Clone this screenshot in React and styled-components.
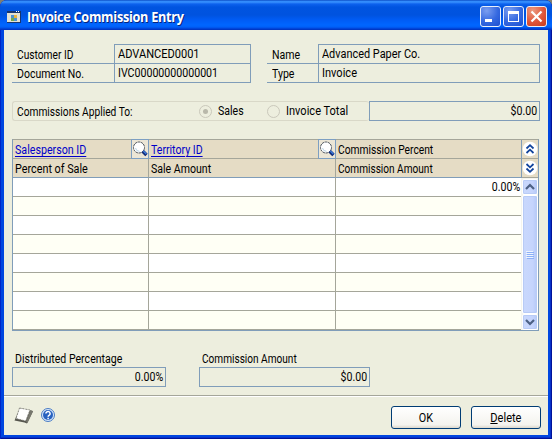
import React from 'react';
import styled, { createGlobalStyle, css } from 'styled-components';

const line = '#809db9';
const grid = '#a5a69a';

const Global = createGlobalStyle`
  * { box-sizing: border-box; }
  html, body { margin: 0; padding: 0; background: #7f7e72; overflow: hidden; }
`;

const Window = styled.div`
  width: 552px;
  height: 439px;
  display: flex;
  flex-direction: column;
  padding: 0 4px 4px;
  border-radius: 7px 7px 0 0;
  background: #0046e0;
  box-shadow: inset 1px 0 #0025c8, inset -1px 0 #00129a, inset 0 -1px #00129a, inset -2px -2px #0831c8;
  font-family: Roboto, "Liberation Sans", sans-serif;
  font-size: 12px;
  line-height: 18px;
  color: #000;
  overflow: hidden;
`;

const TitleBar = styled.header`
  height: 30px;
  flex: none;
  margin: 0 -4px;
  padding: 3px 5px 0 7px;
  display: flex;
  align-items: center;
  background: linear-gradient(#0840b8 0, #2b86f8 1px, #3a92ff 2px, #0d62ee 4px, #0054e0 7px, #0053df 15px, #005cf5 20px, #0066ff 25px, #0060f8 27px, #003dd0 29px, #0030b8 30px);
`;

const Title = styled.h1`
  flex: 1;
  margin: 0 0 0 6px;
  font: 700 13.5px/24px "Open Sans", sans-serif;
  letter-spacing: -0.3px;
  transform: scaleX(0.94);
  transform-origin: left;
  color: #fff;
  text-shadow: 1px 1px #06257d;
  white-space: nowrap;
`;

const Controls = styled.div`
  display: flex;
  gap: 2px;
`;

const Control = styled.button`
  width: 21px;
  height: 21px;
  padding: 0;
  border: 1px solid #e8effb;
  border-radius: 3px;
  background: ${p => p.$close
    ? 'radial-gradient(circle at 30% 20%, #eb9a80, #e0563b 55%, #c93b1c)'
    : 'radial-gradient(circle at 30% 20%, #7b9ef0, #3468e0 55%, #1d4fd0)'};
  svg { display: block; }
`;

const Body = styled.main`
  flex: 1;
  display: flex;
  flex-direction: column;
  background: #edeede;
`;

const Text = styled.span`
  display: inline-block;
  transform: scaleX(${p => p.$fit || 0.88});
  transform-origin: ${p => p.$from || 'left'};
  white-space: pre;
`;

const LinkCell = styled.div`
  flex: 1;
`;

const Link = styled(Text)`
  color: #0000c8;
  text-decoration: underline;
  text-underline-offset: 2px;
  text-decoration-thickness: 1px;
`;

const Fields = styled.section`
  display: flex;
  justify-content: space-between;
  margin: 14px 8px 0;
`;

const FieldGroup = styled.dl`
  width: ${p => p.$width}px;
  margin: 0;
  display: grid;
  grid-template-columns: ${p => p.$label}px 1fr;
  grid-template-rows: 20px 19px;
`;

const FieldLabel = styled.dt`
  padding: ${p => (p.$first ? 2 : 1)}px 0 0 5px;
  border-bottom: 1px solid ${line};
  line-height: 18px;
  white-space: nowrap;
`;

const FieldValue = styled.dd`
  margin: 0;
  padding: 0 0 0 3px;
  border: 1px solid ${line};
  border-top-width: ${p => (p.$first ? 1 : 0)}px;
  white-space: nowrap;
`;

const Applied = styled.section`
  height: 20px;
  display: flex;
  margin: 18px 8px 0;
`;

const RadioGroup = styled.div`
  width: 357px;
  display: flex;
  align-items: center;
  padding-left: 4px;
  border: 1px solid #d9d8c8;
  border-right: 0;
  border-radius: 3px;
`;

const AppliedLabel = styled.div`
  width: 182px;
  padding-top: 2px;
`;

const RadioOption = styled.label`
  width: ${p => p.$width}px;
  display: flex;
  align-items: center;
  gap: 6px;
`;

const Radio = styled.span`
  width: 13px;
  height: 13px;
  flex: none;
  display: grid;
  place-items: center;
  border: 1px solid #cac8bb;
  border-radius: 50%;
  &::after {
    content: '';
    width: 5px;
    height: 5px;
    border-radius: 50%;
    background: ${p => (p.$on ? '#b9b8aa' : 'transparent')};
  }
`;

const Amount = styled.output`
  width: ${p => p.$width}px;
  height: 20px;
  display: block;
  padding-right: 2px;
  border: 1px solid ${line};
  text-align: right;
`;

const Table = styled.section`
  width: 527px;
  height: 192px;
  margin: 18px 0 0 8px;
  display: grid;
  grid-template-columns: 508px 17px;
  grid-template-rows: 38px 152px;
  border: 1px solid ${line};
  border-top-color: ${grid};
`;

const HeadGrid = styled.div`
  display: grid;
  grid-template-columns: 136px 187px 186px;
  grid-template-rows: 19px 19px;
  background: #e5dcc5;
`;

const HeadCell = styled.div`
  display: flex;
  padding: 1px 0 0 2px;
  border-bottom: 1px solid ${p => (p.$last ? line : grid)};
  border-right: ${p => (p.$edge ? '0' : `1px solid ${grid}`)};
  line-height: 18px;
`;

const Lookup = styled.button`
  width: 18px;
  height: 20px;
  flex: none;
  margin: -2px -1px 0 0;
  padding: 0;
  border: 1px solid #7d9fc2;
  background: #ece6d6;
  svg { display: block; }
`;

const HeadTools = styled.div`
  display: grid;
  grid-template-rows: 19px 19px;
  background: #e5dcc5;
  border-left: 1px solid ${line};
`;

const Chevron = styled.button`
  padding: 0;
  border: 0;
  border-bottom: 1px solid ${grid};
  background: transparent;
  svg { display: block; }
`;

const Rows = styled.div`
  display: grid;
  grid-template-columns: 136px 187px 185px;
  grid-auto-rows: 19px;
`;

const Cell = styled.div`
  padding-right: 1px;
  border-bottom: 1px solid ${grid};
  border-right: ${p => (p.$edge ? '0' : `1px solid ${grid}`)};
  background: ${p => (p.$alt ? '#fffff5' : '#fff')};
  text-align: right;
`;

const ScrollBar = styled.div`
  display: flex;
  flex-direction: column;
  padding: 1px 0 0 1px;
  background: #f5f5ee;
`;

const scrollPart = css`
  border: 1px solid #fff;
  border-radius: 2px;
  box-shadow: inset 0 0 0 1px #b8cbf6;
  background: linear-gradient(90deg, #c9d8fc, #c5d4fd 70%, #b4c8f6);
`;

const ScrollArrow = styled.button`
  height: 16px;
  width: 16px;
  padding: 0;
  ${scrollPart}
  svg { display: block; }
`;

const Thumb = styled.div`
  flex: 1;
  width: 16px;
  display: grid;
  place-items: center;
  ${scrollPart}
`;

const Totals = styled.section`
  display: flex;
  gap: 33px;
  margin: 19px 8px 0;
`;

const TotalLabel = styled.div`
  height: 17px;
  padding-left: 3px;
  line-height: 18px;
`;

const Footer = styled.footer`
  flex: 1;
  margin-top: 8px;
  display: flex;
  align-items: flex-start;
  padding: 9px 7px 0 9px;
  border-top: 1px solid ${grid};
  box-shadow: inset 0 1px #fff;
`;

const FooterIcons = styled.div`
  flex: 1;
  display: flex;
  gap: 7px;
  padding-top: 1px;
  svg + svg { margin-top: 2px; }
`;

const PushButton = styled.button`
  width: 70px;
  height: 23px;
  margin: 1px 0 0 10px;
  padding: 0;
  border: 1px solid #003c74;
  border-radius: 3px;
  background: linear-gradient(#fff, #f4f3ee 85%, #dcd7cb);
  font: inherit;
  line-height: 20px;
  color: #000;
`;

const AppIcon = () => (
  <svg width="14" height="12" viewBox="0 0 14 12" shapeRendering="crispEdges">
    <path fill="#e2e1d4" d="M0 0h14v12H0z" />
    <path fill="#17356f" d="M0 0h14v2H0zM13 2h1v10h-1zM0 11h14v1H0z" />
    <path fill="#fff" d="M9 0h1v1H9zM11 0h1v1h-1z" />
    <path fill="#4b90cf" d="M4 4h3v3H4zM7 7h3v3H7z" />
    <path fill="#e9b43c" d="M7 4h3v3H7z" />
    <path fill="#72a84a" d="M4 7h3v3H4z" />
  </svg>
);

const Magnifier = () => (
  <svg width="16" height="18" viewBox="0 0 16 18">
    <circle cx="7" cy="7.5" r="5.5" fill="#fff" stroke="#4b535d" strokeDasharray="2.5 .5" />
    <path d="M3.5 8a4 4 0 0 0 4 3.3" stroke="#b9d3e4" fill="none" />
    <path d="M10.7 11.2l3.8 3.8" stroke="#102a78" strokeWidth="3.4" />
    <path d="M11.3 11l3 3" stroke="#3f7ddc" strokeWidth="1.4" />
  </svg>
);

const DoubleChevron = ({ down }) => (
  <svg width="16" height="18" viewBox="0 0 16 18">
    <circle cx="8" cy="9" r="7.3" fill="#fff" />
    <path
      d={down ? 'M4.5 5l3.5 3.3L11.5 5M4.5 9.5l3.5 3.3l3.5-3.3' : 'M4.5 8.5l3.5-3.3l3.5 3.3M4.5 13l3.5-3.3l3.5 3.3'}
      fill="none" stroke="#12449c" strokeWidth="1.8"
    />
  </svg>
);

const ArrowGlyph = ({ down }) => (
  <svg width="14" height="14" viewBox="0 0 14 14">
    <path d={down ? 'M3 5l4 4l4-4' : 'M3 9l4-4l4 4'} fill="none" stroke="#4d6185" strokeWidth="2.2" />
  </svg>
);

const Grip = () => (
  <svg width="8" height="8" viewBox="0 0 8 8" shapeRendering="crispEdges">
    <path fill="#eef4fe" d="M0 0h7v1H0zM0 2h7v1H0zM0 4h7v1H0zM0 6h7v1H0z" />
    <path fill="#8cb0f8" d="M1 1h7v1H1zM1 3h7v1H1zM1 5h7v1H1zM1 7h7v1H1z" />
  </svg>
);

const NoteIcon = () => (
  <svg width="21" height="19" viewBox="0 0 21 19">
    <path d="M7 2l13 3l-6 12.5l-2.500-1L1.500 14.500z" fill="#55554d" />
    <path d="M17.500 4l2.500 1.500l-5.500 11.500l-1.500-1z" fill="#77776d" />
    <path d="M6.500 2l10.500 2l-4.300 11l-9.700-2.500z" fill="#fff" stroke="#77776f" strokeWidth=".8" strokeDasharray="2 1" />
  </svg>
);

const HelpIcon = () => (
  <svg width="14" height="14" viewBox="0 0 14 14">
    <circle cx="7" cy="7" r="6.5" fill="#d7e6f8" stroke="#4b7cc4" />
    <circle cx="7" cy="7" r="5" fill="#2862c0" />
    <path d="M4.900 5.600a2.100 2.100 0 1 1 3.400 1.600q-1.200.7-1.200 1.600M7.100 9.800v1.500" fill="none" stroke="#fff" strokeWidth="1.5" />
  </svg>
);

const rows = ['0.00%', '', '', '', '', '', '', ''];

export default function App() {
  return (
    <>
      <Global />
      <Window>
        <TitleBar>
          <AppIcon />
          <Title>Invoice Commission Entry</Title>
          <Controls>
            <Control aria-label="Minimize">
              <svg width="19" height="19"><path fill="#fff" d="M4 12h7v3H4z" /></svg>
            </Control>
            <Control aria-label="Maximize">
              <svg width="19" height="19" shapeRendering="crispEdges"><path fill="#fff" fillRule="evenodd" d="M4 4h11v11H4zM5 7h9v7H5z" /></svg>
            </Control>
            <Control $close aria-label="Close">
              <svg width="19" height="19"><path d="M4.500 4.500l10 10M14.500 4.500l-10 10" stroke="#fff" strokeWidth="2.200" /></svg>
            </Control>
          </Controls>
        </TitleBar>
        <Body>
          <Fields>
            <FieldGroup $width={239} $label={102}>
              <FieldLabel $first><Text $fit={0.85}>Customer ID</Text></FieldLabel>
              <FieldValue $first><Text $fit={0.92}>ADVANCED0001</Text></FieldValue>
              <FieldLabel><Text $fit={0.875}>Document No.</Text></FieldLabel>
              <FieldValue><Text $fit={0.885}>IVC00000000000001</Text></FieldValue>
            </FieldGroup>
            <FieldGroup $width={273} $label={51}>
              <FieldLabel $first><Text>Name</Text></FieldLabel>
              <FieldValue $first><Text $fit={0.91}>Advanced Paper Co.</Text></FieldValue>
              <FieldLabel><Text>Type</Text></FieldLabel>
              <FieldValue><Text $fit={0.92}>Invoice</Text></FieldValue>
            </FieldGroup>
          </Fields>
          <Applied>
            <RadioGroup>
              <AppliedLabel><Text $fit={0.85}>Commissions Applied To:</Text></AppliedLabel>
              <RadioOption $width={68}><Radio $on /><Text>Sales</Text></RadioOption>
              <RadioOption $width={100}><Radio /><Text $fit={0.92}>Invoice Total</Text></RadioOption>
            </RadioGroup>
            <Amount $width={171}><Text $from="right">$0.00</Text></Amount>
          </Applied>
          <Table>
            <HeadGrid>
              <HeadCell><LinkCell><Link $fit={0.89}>Salesperson ID</Link></LinkCell><Lookup aria-label="Find salesperson"><Magnifier /></Lookup></HeadCell>
              <HeadCell><LinkCell><Link>Territory ID</Link></LinkCell><Lookup aria-label="Find territory"><Magnifier /></Lookup></HeadCell>
              <HeadCell $edge><Text $fit={0.855}>Commission Percent</Text></HeadCell>
              <HeadCell $last><Text $fit={0.9}>Percent of Sale</Text></HeadCell>
              <HeadCell $last><Text>Sale Amount</Text></HeadCell>
              <HeadCell $last $edge><Text $fit={0.84}>Commission Amount</Text></HeadCell>
            </HeadGrid>
            <HeadTools>
              <Chevron aria-label="Collapse"><DoubleChevron /></Chevron>
              <Chevron aria-label="Expand"><DoubleChevron down /></Chevron>
            </HeadTools>
            <Rows>
              {rows.map((value, i) => (
                <React.Fragment key={i}>
                  <Cell $alt={i % 2} />
                  <Cell $alt={i % 2} />
                  <Cell $alt={i % 2} $edge><Text $from="right">{value}</Text></Cell>
                </React.Fragment>
              ))}
            </Rows>
            <ScrollBar>
              <ScrollArrow aria-label="Scroll up"><ArrowGlyph /></ScrollArrow>
              <Thumb><Grip /></Thumb>
              <ScrollArrow aria-label="Scroll down"><ArrowGlyph down /></ScrollArrow>
            </ScrollBar>
          </Table>
          <Totals>
            <div>
              <TotalLabel><Text>Distributed Percentage</Text></TotalLabel>
              <Amount $width={154}><Text $from="right">0.00%</Text></Amount>
            </div>
            <div>
              <TotalLabel><Text $fit={0.84}>Commission Amount</Text></TotalLabel>
              <Amount $width={171}><Text $from="right">$0.00</Text></Amount>
            </div>
          </Totals>
          <Footer>
            <FooterIcons><NoteIcon /><HelpIcon /></FooterIcons>
            <PushButton><Text $from="center" $fit={0.9}>OK</Text></PushButton>
            <PushButton><Text $from="center" $fit={0.92}><u>D</u>elete</Text></PushButton>
          </Footer>
        </Body>
      </Window>
    </>
  );
}
